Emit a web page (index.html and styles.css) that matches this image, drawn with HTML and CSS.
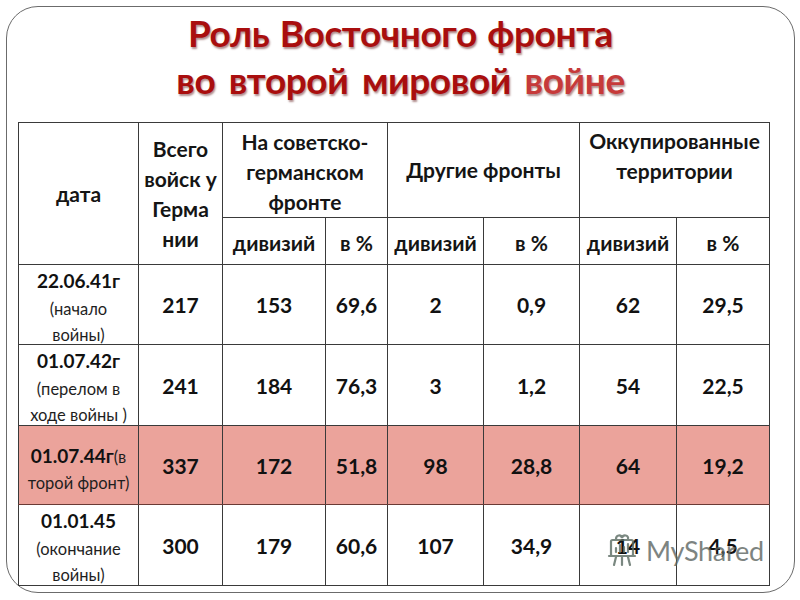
FILE: index.html
```html
<!DOCTYPE html>
<html lang="ru">
<head>
<meta charset="utf-8">
<title>Роль Восточного фронта</title>
<link rel="stylesheet" href="styles.css">
</head>
<body>
<div class="frame">
  <h1 class="title"><span>Роль Восточного фронта</span><span class="line2">во второй мировой <em>войне</em></span></h1>
  <div class="table-wrap">
    <table class="data">
      <colgroup>
        <col class="c1"><col class="c2"><col class="c3"><col class="c4"><col class="c5"><col class="c6"><col class="c7"><col class="c8">
      </colgroup>
      <thead>
        <tr class="h1">
          <th rowspan="2">дата</th>
          <th rowspan="2" class="tall">Всего<br>войск у<br>Герма<br>нии</th>
          <th colspan="2" class="mid">На советско-<br>германском<br>фронте</th>
          <th colspan="2">Другие фронты</th>
          <th colspan="2" class="top">Оккупированные<br>территории</th>
        </tr>
        <tr class="h2">
          <th>дивизий</th><th>в %</th><th>дивизий</th><th>в %</th><th>дивизий</th><th>в %</th>
        </tr>
      </thead>
      <tbody>
        <tr class="r1">
          <td class="date"><div class="date-in"><b>22.06.41г</b><br><small>(начало<br>войны)</small></div></td>
          <td>217</td><td>153</td><td>69,6</td><td>2</td><td>0,9</td><td>62</td><td>29,5</td>
        </tr>
        <tr class="r2">
          <td class="date"><div class="date-in"><b>01.07.42г</b><br><small>(перелом в<br>ходе войны )</small></div></td>
          <td>241</td><td>184</td><td>76,3</td><td>3</td><td>1,2</td><td>54</td><td>22,5</td>
        </tr>
        <tr class="r3 hl">
          <td class="date"><div class="date-in two"><b>01.07.44г</b><small>(в<br>торой фронт)</small></div></td>
          <td>337</td><td>172</td><td>51,8</td><td>98</td><td>28,8</td><td>64</td><td>19,2</td>
        </tr>
        <tr class="r4">
          <td class="date"><div class="date-in"><b>01.01.45</b><br><small>(окончание<br>войны)</small></div></td>
          <td>300</td><td>179</td><td>60,6</td><td>107</td><td>34,9</td><td>14</td><td>4,5</td>
        </tr>
      </tbody>
    </table>
    <div class="watermark">
      <svg class="wm-icon" width="30" height="34" viewBox="0 0 30 34" aria-hidden="true">
        <g fill="none" stroke="#5a6b62" stroke-width="2.2" stroke-linecap="round">
          <path d="M9 6 C9 2 14 1 15 5 C16 1 22 2 21 6"/>
          <rect x="4" y="7" width="22" height="16" rx="1.5"/>
          <path d="M9 19 V15 M13 19 V12 M17 19 V14 M21 19 V11"/>
          <path d="M2 23 H28"/>
          <path d="M9 24 L7 32 M15 24 V32 M21 24 L23 32"/>
        </g>
      </svg>
      <span class="wm-text">MyShared</span>
    </div>
  </div>
</div>
</body>
</html>
```

FILE: styles.css
```css
html, body {
  margin: 0;
  padding: 0;
  background: #ffffff;
}
body {
  width: 800px;
  height: 600px;
  overflow: hidden;
  font-family: Lato, "Liberation Sans", sans-serif;
  color: #111;
}
.frame {
  margin: 6px 0 0 6px;
  width: 789px;
  height: 587px;
  border: 1.5px solid #6b6b6b;
  border-radius: 32px;
  box-sizing: border-box;
  display: flex;
  flex-direction: column;
}
.title {
  margin: 0;
  flex: 0 0 115px;
  display: flex;
  flex-direction: column;
  align-items: center;
  justify-content: flex-start;
  padding-top: 2px;
  box-sizing: border-box;
  font-family: Lato, sans-serif;
  font-weight: 700;
  font-size: 37px;
  line-height: 47px;
  color: #a90e0e;
  text-shadow: 1px 2px 2px rgba(80, 0, 0, 0.45);
  letter-spacing: -0.4px;
  word-spacing: 2px;
}
.title .line2 {
  word-spacing: 5px;
}
.title em {
  font-style: normal;
  color: #c63a3a;
}
.table-wrap {
  position: relative;
  flex: 0 0 auto;
  margin-left: 11px;
  width: 751px;
}
.data {
  border-collapse: collapse;
  table-layout: fixed;
  width: 751px;
}
.c1 { width: 120px; }
.c2 { width: 84px; }
.c3 { width: 103px; }
.c4 { width: 62px; }
.c5 { width: 96px; }
.c6 { width: 96px; }
.c7 { width: 97px; }
.c8 { width: 93px; }
.data th, .data td {
  border: 1px solid #3a3a3a;
  padding: 0;
  text-align: center;
  vertical-align: middle;
}
.data th {
  font-weight: 700;
  font-size: 21px;
  line-height: 30px;
  color: #151515;
  white-space: nowrap;
}
.data th.tall { padding-top: 0; }
.data th.mid { vertical-align: top; padding-top: 4px; }
.data th.top { vertical-align: top; padding-top: 3px; }
.h1 { height: 93px; }
.h2 { height: 47px; }
.h2 th { padding-top: 3px; }
.data td {
  font-weight: 700;
  font-size: 21px;
  color: #111;
}
.data td.date {
  vertical-align: top;
}
.date-in {
  box-sizing: border-box;
  height: 78px;
  padding-top: 3px;
  font-size: 16.5px;
  line-height: 26.5px;
  white-space: nowrap;
}
.date-in.two {
  padding-top: 17px;
  line-height: 26px;
}
.date-in b {
  font-size: 19px;
  font-weight: 700;
}
.date-in small {
  font-size: 16.5px;
  font-weight: 400;
  color: #1e1e1e;
}
.r1 { height: 80px; }
.r2 { height: 81px; }
.r3 { height: 79px; }
.r4 { height: 81px; }
.hl td {
  background: #eba39b;
  border-top-color: #6a3a35;
  border-bottom-color: #6a3a35;
}
.watermark {
  position: absolute;
  left: 589px;
  top: 411px;
  display: flex;
  align-items: center;
  gap: 9px;
  pointer-events: none;
  opacity: 0.8;
}
.wm-text {
  font-family: Lato, sans-serif;
  font-size: 27px;
  font-weight: 400;
  color: #5d6662;
  letter-spacing: -0.3px;
}
```
